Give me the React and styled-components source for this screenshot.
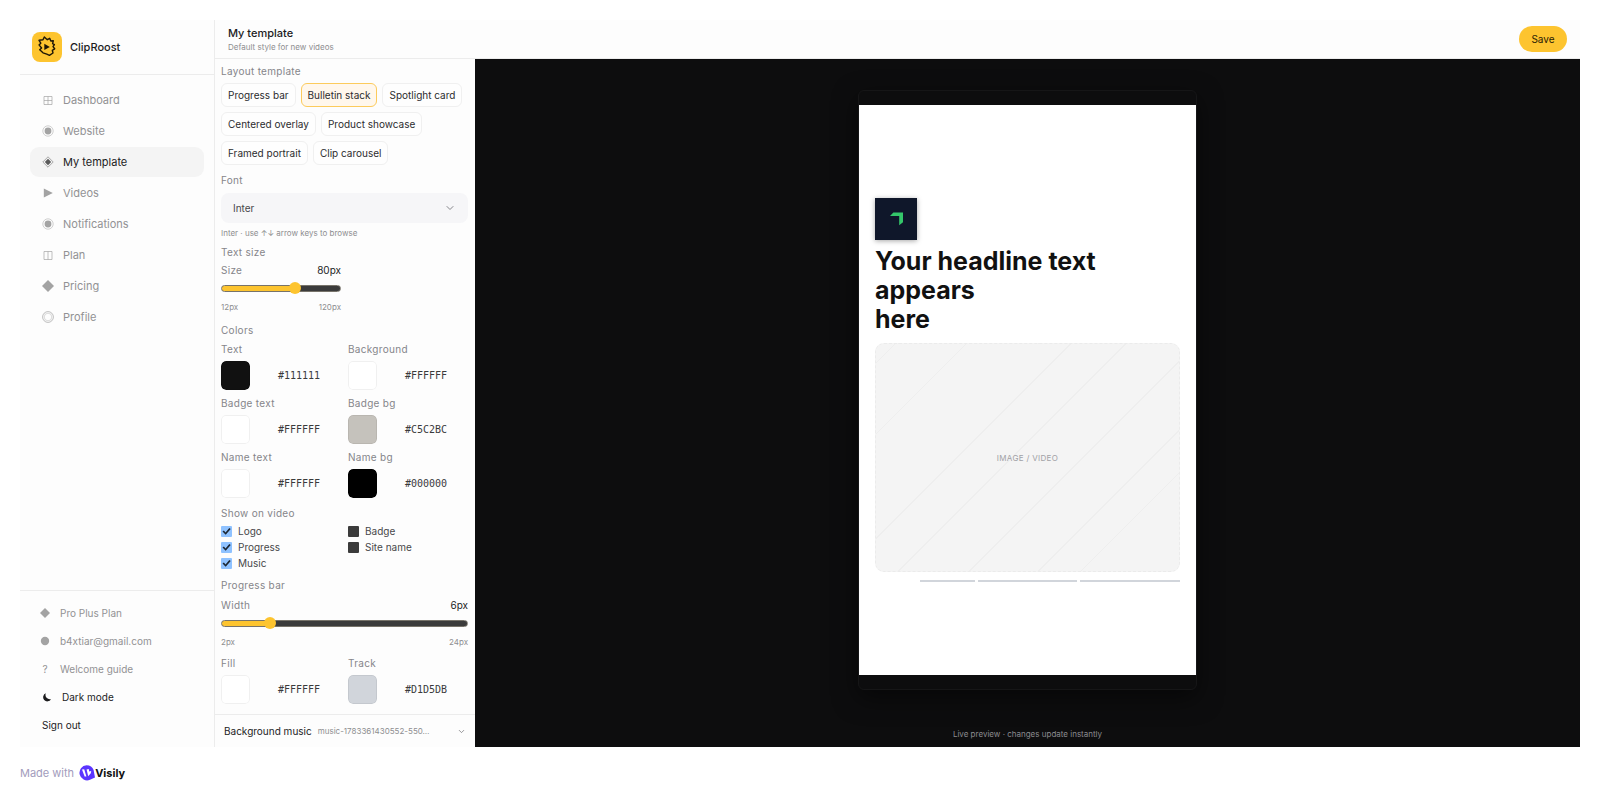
import React, { useState } from "react";
import styled, { createGlobalStyle } from "styled-components";
import { ChevronDown } from "lucide-react";

const navItems = [
  { label: "Dashboard", icon: "grid" },
  { label: "Website", icon: "dot" },
  { label: "My template", icon: "gem" },
  { label: "Videos", icon: "play" },
  { label: "Notifications", icon: "dot" },
  { label: "Plan", icon: "columns" },
  { label: "Pricing", icon: "diamond" },
  { label: "Profile", icon: "ring" },
];

const accountItems = [
  { label: "Pro Plus Plan", icon: "diamond" },
  { label: "b4xtiar@gmail.com", icon: "circle" },
  { label: "Welcome guide", icon: "help" },
];

const layouts = [
  "Progress bar",
  "Bulletin stack",
  "Spotlight card",
  "Centered overlay",
  "Product showcase",
  "Framed portrait",
  "Clip carousel",
];

const textColors = [
  { id: "text", label: "Text", value: "#111111" },
  { id: "background", label: "Background", value: "#FFFFFF" },
  { id: "badge-text", label: "Badge text", value: "#FFFFFF" },
  { id: "badge-bg", label: "Badge bg", value: "#C5C2BC" },
  { id: "name-text", label: "Name text", value: "#FFFFFF" },
  { id: "name-bg", label: "Name bg", value: "#000000" },
];

const barColors = [
  { id: "fill", label: "Fill", value: "#FFFFFF" },
  { id: "track", label: "Track", value: "#D1D5DB" },
];

const toggles = [
  { label: "Logo", on: true },
  { label: "Badge", on: false },
  { label: "Progress", on: true },
  { label: "Site name", on: false },
  { label: "Music", on: true },
];

// diagonal hairlines of the media placeholder, measured along the gradient
const stripes = [13, 63, 137, 176, 226, 275, 305]
  .map((at) => `#f4f4f4 ${at}px, #eeeeee ${at}px ${at + 1}px, #f4f4f4 ${at + 1}px`)
  .join(", ");

function Glyph({ name }) {
  return (
    <GlyphSvg viewBox="0 0 12 12" aria-hidden="true">
      {name === "grid" && (
        <path d="M2 2.5h8v8H2zM6 2.5v8M2 6.5h8" fill="none" stroke="currentColor" strokeWidth="0.7" />
      )}
      {name === "columns" && (
        <path d="M2 2.5h8v8H2zM6 2.5v8" fill="none" stroke="currentColor" strokeWidth="0.7" />
      )}
      {name === "dot" && (
        <>
          <circle cx="6" cy="6" r="5.2" fill="none" stroke="currentColor" strokeWidth="0.5" />
          <circle cx="6" cy="6" r="3.4" fill="currentColor" />
        </>
      )}
      {name === "ring" && (
        <>
          <circle cx="6" cy="6" r="5.4" fill="none" stroke="currentColor" strokeWidth="0.7" />
          <circle cx="6" cy="6" r="3.8" fill="none" stroke="currentColor" strokeWidth="0.4" />
        </>
      )}
      {name === "gem" && (
        <>
          <path d="M6 .8 11.2 6 6 11.2.8 6z" fill="none" stroke="currentColor" strokeWidth="0.5" />
          <path d="M6 2.8 9.2 6 6 9.2 2.8 6z" fill="currentColor" />
        </>
      )}
      {name === "play" && <path d="M1.8 1.6 10.8 6 1.8 10.4z" fill="currentColor" />}
      {name === "diamond" && <path d="M6 0 12 6 6 12 0 6z" fill="currentColor" />}
      {name === "circle" && <circle cx="6" cy="6" r="5" fill="currentColor" />}
      {name === "moon" && (
        <path d="M4.6 1.6A5 5 0 1 0 10.8 8.6 5.2 5.2 0 0 1 4.6 1.6z" fill="currentColor" />
      )}
    </GlyphSvg>
  );
}

function ColorField({ id, label, value }) {
  const [color, setColor] = useState(value);
  return (
    <Field>
      <FieldLabel htmlFor={id}>{label}</FieldLabel>
      <ColorRow>
        <Swatch
          id={id}
          type="color"
          value={color.toLowerCase()}
          onChange={(e) => setColor(e.target.value.toUpperCase())}
        />
        <HexInput
          type="text"
          aria-label={`${label} hex`}
          value={color}
          onChange={(e) => setColor(e.target.value)}
        />
      </ColorRow>
    </Field>
  );
}

function SliderField({ id, label, min, max, initial }) {
  const [value, setValue] = useState(initial);
  const fill = ((value - min) / (max - min)) * 100;
  return (
    <Field>
      <SliderHead>
        <FieldLabel htmlFor={id}>{label}</FieldLabel>
        <SliderValue htmlFor={id}>{value}px</SliderValue>
      </SliderHead>
      <Slider
        id={id}
        type="range"
        min={min}
        max={max}
        value={value}
        onChange={(e) => setValue(Number(e.target.value))}
        style={{ "--fill": `${fill}%` }}
      />
      <SliderScale>
        <span>{min}px</span>
        <span>{max}px</span>
      </SliderScale>
    </Field>
  );
}

export default function App() {
  const [layout, setLayout] = useState("Bulletin stack");

  return (
    <Page>
      <GlobalStyle />
      <Shell>
        <Sidebar>
          <Brand>
            <BrandMark viewBox="0 0 30 30" aria-hidden="true">
              <rect width="30" height="30" rx="8" fill="#fdc42f" />
              <path
                d="M7 8.3 11 7.7 12.3 5 15.3 7.7 17.7 6.3 18.8 9 21.3 8.8 20.6 11.6 22.4 12.6 21 14.6 22.7 16.8 20.3 18.3 21 21 17.4 23.3 14.8 22.2 11 20.8 7.7 17.7 9.6 16 7 12.9 8.8 11.2z"
                fill="none"
                stroke="#1d1606"
                strokeWidth="1.4"
                strokeLinejoin="round"
              />
              <path d="M12.3 11.8 17.8 15 12.3 18z" fill="#1d1606" />
            </BrandMark>
            ClipRoost
          </Brand>

          <Nav>
            {navItems.map((item) => (
              <NavLink href="#" key={item.label} $active={item.label === "My template"}>
                <Glyph name={item.icon} />
                {item.label}
              </NavLink>
            ))}
          </Nav>

          <Account>
            {accountItems.map((item) => (
              <AccountLink href="#" key={item.label}>
                {item.icon === "help" ? <HelpMark>?</HelpMark> : <Glyph name={item.icon} />}
                {item.label}
              </AccountLink>
            ))}
            <AccountButton type="button">
              <Glyph name="moon" />
              Dark mode
            </AccountButton>
            <AccountButton type="button">Sign out</AccountButton>
          </Account>
        </Sidebar>

        <Main>
          <Header>
            <div>
              <Title>My template</Title>
              <Subtitle>Default style for new videos</Subtitle>
            </div>
            <SaveButton type="button">Save</SaveButton>
          </Header>

          <Editor>
            <Panel>
              <Settings>
                {/* layout */}
                <Section>
                  <SectionTitle>Layout template</SectionTitle>
                  <Chips>
                    {layouts.map((name) => (
                      <Chip
                        type="button"
                        key={name}
                        $active={name === layout}
                        onClick={() => setLayout(name)}
                      >
                        {name}
                      </Chip>
                    ))}
                  </Chips>
                </Section>

                {/* font */}
                <Section $gap={6}>
                  <FieldLabel htmlFor="font">Font</FieldLabel>
                  <SelectBox>
                    <FontSelect id="font" defaultValue="Inter">
                      <option>Inter</option>
                      <option>Roboto</option>
                      <option>Lato</option>
                    </FontSelect>
                    <ChevronDown size={12} strokeWidth={2} />
                  </SelectBox>
                  <Hint>Inter · use ↑↓ arrow keys to browse</Hint>
                </Section>

                {/* text size */}
                <Section>
                  <SectionTitle>Text size</SectionTitle>
                  <TwoColumns>
                    <SliderField id="size" label="Size" min={12} max={120} initial={80} />
                  </TwoColumns>
                </Section>

                {/* colors */}
                <Section $gap={6}>
                  <SectionTitle>Colors</SectionTitle>
                  <TwoColumns>
                    {textColors.map((c) => (
                      <ColorField key={c.id} {...c} />
                    ))}
                  </TwoColumns>
                </Section>

                {/* toggles */}
                <Section>
                  <SectionTitle>Show on video</SectionTitle>
                  <Toggles>
                    {toggles.map((t) => (
                      <Toggle key={t.label}>
                        <Checkbox type="checkbox" defaultChecked={t.on} />
                        {t.label}
                      </Toggle>
                    ))}
                  </Toggles>
                </Section>

                {/* progress bar */}
                <Section $gap={7}>
                  <SectionTitle>Progress bar</SectionTitle>
                  <SliderField id="width" label="Width" min={2} max={24} initial={6} />
                  <TwoColumns>
                    {barColors.map((c) => (
                      <ColorField key={c.id} {...c} />
                    ))}
                  </TwoColumns>
                </Section>
              </Settings>

              <MusicBar type="button">
                <span>Background music</span>
                <TrackName>music-1783361430552-550…</TrackName>
                <ChevronDown size={9} strokeWidth={2} />
              </MusicBar>
            </Panel>

            <Preview>
              <Frame>
                <Canvas>
                  <SiteLogo viewBox="0 0 42 42" aria-hidden="true">
                    <rect width="42" height="42" fill="#0f172a" />
                    <path d="M18.4 14.4H28v9.8l-3.8 3V18H15z" fill="#34c76a" />
                  </SiteLogo>
                  <Headline>
                    Your headline text appears
                    <br />
                    here
                  </Headline>
                  <MediaBox>IMAGE / VIDEO</MediaBox>
                  <Segments>
                    <Segment $played={45} />
                    <Segment $played={0} />
                    <Segment $played={0} />
                  </Segments>
                </Canvas>
              </Frame>
              <Caption>Live preview · changes update instantly</Caption>
            </Preview>
          </Editor>
        </Main>
      </Shell>

      <Credit>
        Made with
        <VisilyLink href="#">
          <VisilyMark viewBox="0 0 16 16" aria-hidden="true">
            <path
              d="M7.6.2C11 .2 13.6 2 14.6 5l1.4 7.4-5 2.4A7.6 7.6 0 1 1 7.6.2z"
              fill="#5b35ff"
            />
            <path d="M3 4.6 5.2 4.2 7.4 11.6 5.6 11.4z" fill="#fff" />
            <path d="M7.6 4.4 9.8 4l.4 2.6L12.2 6l-.4 2.2-2.6 3z" fill="#fff" />
          </VisilyMark>
          Visily
        </VisilyLink>
      </Credit>
    </Page>
  );
}

const GlobalStyle = createGlobalStyle`
  * {
    box-sizing: border-box;
  }
  body {
    margin: 0;
    background: #fff;
    font-family: Inter, "Liberation Sans", sans-serif;
    color: #1c1c1e;
  }
  button,
  input,
  select {
    font-family: inherit;
    margin: 0;
  }
  button {
    cursor: pointer;
  }
`;

const Page = styled.div`
  min-height: 100vh;
  padding: 20px 20px 0;
  display: flex;
  flex-direction: column;
`;

const Shell = styled.div`
  flex: 1;
  display: flex;
  background: #fdfdfd;
`;

/* sidebar */
const Sidebar = styled.aside`
  width: 195px;
  flex-shrink: 0;
  display: flex;
  flex-direction: column;
  border-right: 1px solid #ececec;
`;

const Brand = styled.div`
  height: 55px;
  padding: 0 12px;
  display: flex;
  align-items: center;
  gap: 8px;
  border-bottom: 1px solid #ececec;
  font-size: 11px;
  font-weight: 500;
`;

const BrandMark = styled.svg`
  width: 30px;
  height: 30px;
`;

const GlyphSvg = styled.svg`
  width: 12px;
  height: 12px;
  flex-shrink: 0;
`;

const Nav = styled.nav`
  flex: 1;
  padding: 10px;
  display: flex;
  flex-direction: column;
  gap: 1px;
`;

const NavLink = styled.a`
  height: 30px;
  padding: 0 12px;
  display: flex;
  align-items: center;
  gap: 9px;
  border-radius: 9px;
  font-size: 11px;
  text-decoration: none;
  color: ${({ $active }) => ($active ? "#1c1c1e" : "#929294")};
  background: ${({ $active }) => ($active ? "#f4f4f4" : "transparent")};
  ${GlyphSvg} {
    color: ${({ $active }) => ($active ? "#5a5a5a" : "#a3a3a3")};
  }
`;

const Account = styled.div`
  padding: 8px 20px;
  display: flex;
  flex-direction: column;
  border-top: 1px solid #ececec;
`;

const AccountLink = styled.a`
  height: 28px;
  display: flex;
  align-items: center;
  gap: 10px;
  font-size: 10px;
  text-decoration: none;
  color: #929294;
  ${GlyphSvg} {
    width: 10px;
    color: #a3a3a3;
  }
`;

const HelpMark = styled.span`
  width: 10px;
  text-align: center;
`;

const AccountButton = styled.button`
  height: 28px;
  padding: 0 2px;
  display: flex;
  align-items: center;
  gap: 10px;
  border: none;
  background: transparent;
  font-size: 10px;
  color: #1c1c1e;
  ${GlyphSvg} {
    width: 10px;
  }
`;

/* header */
const Main = styled.main`
  flex: 1;
  min-width: 0;
  display: flex;
  flex-direction: column;
`;

const Header = styled.header`
  height: 39px;
  padding: 0 13px;
  display: flex;
  align-items: center;
  justify-content: space-between;
  border-bottom: 1px solid #ececec;
`;

const Title = styled.h1`
  margin: 0;
  font-size: 11px;
  line-height: 16px;
  font-weight: 500;
`;

const Subtitle = styled.p`
  margin: 0;
  font-size: 8px;
  line-height: 12px;
  color: #8e8e90;
`;

const SaveButton = styled.button`
  height: 26px;
  width: 48px;
  border: none;
  border-radius: 13px;
  background: #fdc42f;
  font-size: 10px;
  color: #2b2205;
`;

const Editor = styled.div`
  flex: 1;
  display: flex;
`;

/* settings panel */
const Panel = styled.section`
  width: 260px;
  flex-shrink: 0;
  display: flex;
  flex-direction: column;
`;

const Settings = styled.div`
  flex: 1;
  padding: 6px 7px 6px 6px;
  display: flex;
  flex-direction: column;
  gap: 9px;
`;

const Section = styled.div`
  display: flex;
  flex-direction: column;
  gap: ${({ $gap = 5 }) => $gap}px;
`;

const SectionTitle = styled.h2`
  margin: 0;
  font-size: 10px;
  line-height: 13px;
  font-weight: 400;
  letter-spacing: 0.03em;
  color: #85858a;
`;

const FieldLabel = styled.label`
  font-size: 10px;
  line-height: 13px;
  letter-spacing: 0.03em;
  color: #85858a;
`;

const Chips = styled.div`
  display: flex;
  flex-wrap: wrap;
  gap: 5px;
`;

const Chip = styled.button`
  height: 24px;
  padding: 0 6px;
  border: 1px solid ${({ $active }) => ($active ? "#fccb5c" : "#f0f0f0")};
  border-radius: 6px;
  background: ${({ $active }) => ($active ? "#fff7ec" : "#fefefe")};
  font-size: 10px;
  color: #2c2c2e;
`;

const SelectBox = styled.div`
  position: relative;
  svg {
    position: absolute;
    right: 12px;
    top: 9px;
    color: #85858a;
    pointer-events: none;
  }
`;

const FontSelect = styled.select`
  appearance: none;
  width: 100%;
  height: 30px;
  padding: 0 12px;
  border: none;
  border-radius: 8px;
  background: #f6f6f8;
  font-size: 10px;
  color: #48484a;
`;

const Hint = styled.p`
  margin: 0;
  font-size: 8px;
  line-height: 8px;
  color: #8e8e90;
`;

const TwoColumns = styled.div`
  display: grid;
  grid-template-columns: 1fr 1fr;
  gap: 7px;
`;

const Field = styled.div`
  display: flex;
  flex-direction: column;
  gap: 5px;
`;

const SliderHead = styled.div`
  display: flex;
  justify-content: space-between;
`;

const SliderValue = styled.label`
  font-size: 10px;
  line-height: 13px;
  color: #1c1c1e;
`;

const Slider = styled.input`
  appearance: none;
  width: 100%;
  height: 13px;
  background: transparent;
  &::-webkit-slider-runnable-track {
    height: 7px;
    border: 1px solid #77736a;
    border-radius: 4px;
    background: linear-gradient(to right, #fdc42f var(--fill), #3b3b3b var(--fill));
  }
  &::-webkit-slider-thumb {
    appearance: none;
    width: 12px;
    height: 12px;
    margin-top: -4px;
    border-radius: 50%;
    background: #fdc42f;
  }
`;

const SliderScale = styled.div`
  display: flex;
  justify-content: space-between;
  font-size: 8px;
  line-height: 15px;
  color: #8e8e90;
`;

const ColorRow = styled.div`
  display: flex;
  align-items: center;
  gap: 7px;
`;

const Swatch = styled.input`
  appearance: none;
  width: 29px;
  height: 29px;
  flex-shrink: 0;
  padding: 0;
  border: none;
  border-radius: 5px;
  background: transparent;
  overflow: hidden;
  &::-webkit-color-swatch-wrapper {
    padding: 0;
  }
  &::-webkit-color-swatch {
    border: 1px solid rgba(0, 0, 0, 0.06);
    border-radius: 5px;
  }
`;

const HexInput = styled.input`
  width: 100%;
  min-width: 0;
  padding: 0;
  border: none;
  background: transparent;
  font-family: "DejaVu Sans Mono", monospace;
  font-size: 10px;
  text-align: center;
  color: #3a3a3c;
`;

const Toggles = styled.div`
  display: grid;
  grid-template-columns: 1fr 1fr;
  gap: 3px 7px;
`;

const Toggle = styled.label`
  display: flex;
  align-items: center;
  gap: 6px;
  font-size: 10px;
  line-height: 13px;
  color: #48484a;
`;

const Checkbox = styled.input`
  appearance: none;
  width: 11px;
  height: 11px;
  display: grid;
  place-items: center;
  border-radius: 1px;
  background: #3b3b3b;
  &:checked {
    background: #8fc2ff;
  }
  &:checked::after {
    content: "";
    width: 10px;
    height: 8px;
    background: #1c2733;
    clip-path: polygon(10% 50%, 24% 38%, 40% 62%, 78% 6%, 92% 18%, 42% 92%);
  }
`;

const MusicBar = styled.button`
  height: 33px;
  padding: 0 9px;
  display: flex;
  align-items: center;
  gap: 6px;
  border: none;
  border-top: 1px solid #ececec;
  background: transparent;
  font-size: 10px;
  color: #1c1c1e;
  svg {
    margin-left: auto;
    color: #77777b;
  }
`;

const TrackName = styled.span`
  font-size: 8px;
  color: #8e8e90;
`;

/* preview */
const Preview = styled.section`
  flex: 1;
  min-width: 0;
  padding: 31px 20px 7px;
  display: flex;
  flex-direction: column;
  align-items: center;
  justify-content: space-between;
  background: #0d0d0e;
`;

const Frame = styled.div`
  width: 339px;
  aspect-ratio: 339 / 600;
  padding: 14px 0;
  display: flex;
  border: 1px solid #161617;
  border-radius: 6px;
  background: #0d0d0e;
  box-shadow: 0 8px 24px rgba(0, 0, 0, 0.5);
`;

const Canvas = styled.div`
  flex: 1;
  padding: 0 16px;
  display: flex;
  flex-direction: column;
  justify-content: center;
  background: #fff;
`;

const SiteLogo = styled.svg`
  width: 42px;
  height: 42px;
  box-shadow: 0 1px 5px rgba(0, 0, 0, 0.35);
`;

const Headline = styled.h2`
  margin: 7px 0 9px;
  font-size: 25px;
  line-height: 29px;
  font-weight: 700;
  color: #111;
`;

const MediaBox = styled.div`
  height: 229px;
  display: flex;
  align-items: center;
  justify-content: center;
  border: 1px dashed #ebebeb;
  border-radius: 9px;
  background: linear-gradient(135deg, ${stripes});
  font-size: 8px;
  letter-spacing: 0.04em;
  color: #a1a1a5;
`;

const Segments = styled.div`
  margin-top: 8px;
  display: grid;
  grid-template-columns: repeat(3, 1fr);
  gap: 3px;
`;

const Segment = styled.div`
  height: 2px;
  background: linear-gradient(
    to right,
    #fff ${({ $played }) => $played}%,
    #d1d5db ${({ $played }) => $played}%
  );
`;

const Caption = styled.p`
  margin: 0;
  font-size: 8px;
  line-height: 12px;
  color: #8b8b8f;
`;

/* credit */
const Credit = styled.footer`
  height: 52px;
  display: flex;
  align-items: center;
  gap: 5px;
  font-size: 11px;
  color: #a29cbc;
`;

const VisilyLink = styled.a`
  display: flex;
  align-items: center;
  font-size: 11px;
  font-weight: 700;
  text-decoration: none;
  color: #111;
`;

const VisilyMark = styled.svg`
  width: 16px;
  height: 16px;
`;
